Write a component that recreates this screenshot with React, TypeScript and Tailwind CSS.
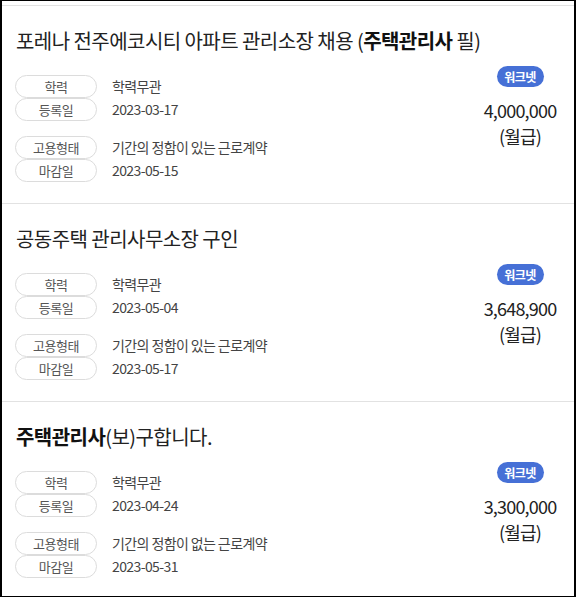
import React from "react";

type Job = {
  title: React.ReactNode;
  edu: string;
  reg: string;
  type: string;
  due: string;
  pay: string;
};

const jobs: Job[] = [
  {
    title: (
      <>
        포레나 전주에코시티 아파트 관리소장 채용 (<b className="font-bold text-[#111]">주택관리사</b> 필)
      </>
    ),
    edu: "학력무관",
    reg: "2023-03-17",
    type: "기간의 정함이 있는 근로계약",
    due: "2023-05-15",
    pay: "4,000,000",
  },
  {
    title: <>공동주택 관리사무소장 구인</>,
    edu: "학력무관",
    reg: "2023-05-04",
    type: "기간의 정함이 있는 근로계약",
    due: "2023-05-17",
    pay: "3,648,900",
  },
  {
    title: (
      <>
        <b className="font-bold text-[#111]">주택관리사</b>(보)구합니다.
      </>
    ),
    edu: "학력무관",
    reg: "2023-04-24",
    type: "기간의 정함이 없는 근로계약",
    due: "2023-05-31",
    pay: "3,300,000",
  },
];

function Row({ label, value }: { label: string; value: string }) {
  return (
    <div className="flex items-center h-[23px]">
      <div className="w-[82px] h-[23px] rounded-full border border-[#dcdcdc] flex items-center justify-center text-[13px] tracking-[-0.4px] text-[#555]">
        {label}
      </div>
      <div className="ml-[15px] text-[14px] tracking-[-0.6px] text-[#444]">{value}</div>
    </div>
  );
}

function Card({ job }: { job: Job }) {
  return (
    <div className="h-[198px] shrink-0 border-t border-[#e2e2e2] pl-[13px] pr-[14px] pt-[21px]">
      <div className="h-[28px] leading-[28px] text-[20px] tracking-[-0.55px] text-[#222] pl-[1px] whitespace-nowrap">
        {job.title}
      </div>
      <div className="mt-[11px] flex justify-between">
        <div className="pt-[9px] flex flex-col">
          <Row label="학력" value={job.edu} />
          <Row label="등록일" value={job.reg} />
          <div className="h-[15px]" />
          <Row label="고용형태" value={job.type} />
          <Row label="마감일" value={job.due} />
        </div>
        <div className="w-[90px] mr-[-5px] flex flex-col items-center">
          <div className="w-[47px] h-[21px] rounded-full bg-[#4670d6] text-white text-[12px] font-bold tracking-[-0.5px] flex items-center justify-center">
            워크넷
          </div>
          <div className="mt-[12px] h-[22px] leading-[22px] text-[18px] tracking-[-0.8px] text-[#222]">{job.pay}</div>
          <div className="mt-[4px] h-[22px] leading-[22px] text-[18px] tracking-[-0.8px] text-[#222]">(월급)</div>
        </div>
      </div>
    </div>
  );
}

export default function App() {
  return (
    <div className="w-[576px] h-[597px] overflow-hidden bg-white border-t border-b border-l-2 border-r-2 border-black pt-[4px] flex flex-col font-['Noto_Sans_CJK_KR','Noto_Sans',sans-serif]">
      {jobs.map((j, i) => (
        <Card key={i} job={j} />
      ))}
    </div>
  );
}
